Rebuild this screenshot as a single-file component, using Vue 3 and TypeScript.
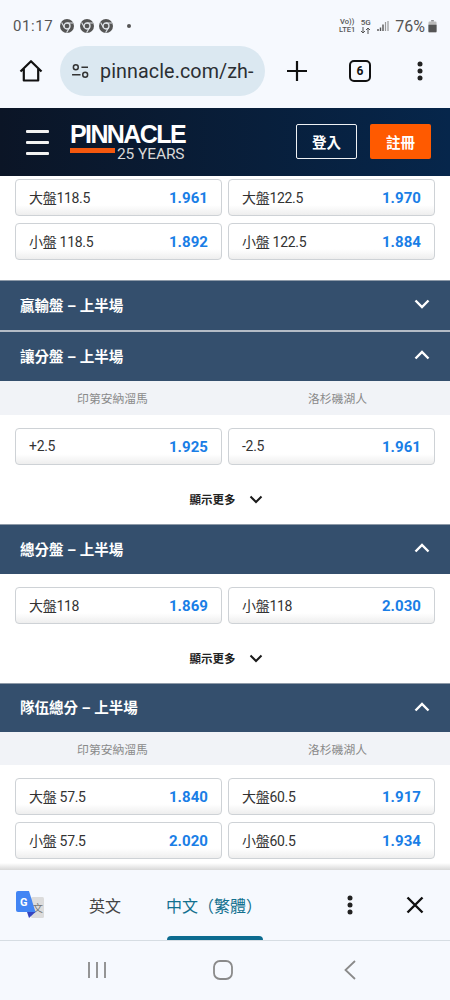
<script setup lang="ts">
interface Odd { label: string; price: string }
interface Row { left: Odd; right: Odd }
const topRows: Row[] = [
  { left: { label: '大盤118.5', price: '1.961' }, right: { label: '大盤122.5', price: '1.970' } },
  { left: { label: '小盤 118.5', price: '1.892' }, right: { label: '小盤 122.5', price: '1.884' } },
]
const spreadRows: Row[] = [
  { left: { label: '+2.5', price: '1.925' }, right: { label: '-2.5', price: '1.961' } },
]
const totalRows: Row[] = [
  { left: { label: '大盤118', price: '1.869' }, right: { label: '小盤118', price: '2.030' } },
]
const teamRows: Row[] = [
  { left: { label: '大盤 57.5', price: '1.840' }, right: { label: '大盤60.5', price: '1.917' } },
  { left: { label: '小盤 57.5', price: '2.020' }, right: { label: '小盤60.5', price: '1.934' } },
]
const sections = [
  { title: '讓分盤 – 上半場', teams: true, rows: spreadRows, more: true },
  { title: '總分盤 – 上半場', teams: false, rows: totalRows, more: true },
  { title: '隊伍總分 – 上半場', teams: true, rows: teamRows, more: false },
]
</script>

<template>
  <div class="phone">
    <div class="status">
      <div class="status-left">
        <span class="clock">01:17</span>
        <svg v-for="n in 3" :key="n" class="chrome" viewBox="0 0 14 14">
          <circle cx="7" cy="7" r="7" fill="#555" />
          <circle cx="7" cy="7" r="3" fill="#555" stroke="#dfe3e8" stroke-width="1.3" />
          <path d="M7 4H13M4.400 8.500L1.600 3.500M9.600 8.500L6.600 13.600" stroke="#dfe3e8" stroke-width="1.100" fill="none" />
        </svg>
        <span class="dot"></span>
      </div>
      <div class="status-right">
        <span class="net"><span>Vo))</span><span>LTE1</span></span>
        <span class="net net-5g">
          <span>5G</span>
          <svg class="arrows" viewBox="0 0 11 7">
            <path d="M3 0v6M1 4l2 2 2-2M8 7V1M6 3l2-2 2 2" fill="none" stroke="#555" stroke-width="1" />
          </svg>
        </span>
        <svg class="signal" viewBox="0 0 12 12">
          <path d="M1 9v2M3.500 7.500v3.500M6 4.500v6.500" stroke="#555" stroke-width="1.400" />
          <path d="M8.500 2v9M11 1v10" stroke="#999" stroke-width="1.200" />
        </svg>
        <span class="pct">76%</span>
        <svg class="battery" viewBox="0 0 10 14">
          <path d="M3.500 0h3v1.500h-3z" fill="#777" />
          <rect x="0.500" y="1.500" width="9" height="12" rx="1.300" fill="#bbb" />
          <path d="M0.500 5h9v7.200a1.300 1.300 0 0 1-1.300 1.300H1.800a1.300 1.300 0 0 1-1.300-1.300z" fill="#555" />
        </svg>
      </div>
    </div>

    <div class="toolbar">
      <svg class="home" viewBox="0 0 24 24">
        <path d="M1.500 12.500L12 2.200 22.500 12.500M4.800 10v11.500h14.400V10" fill="none" stroke="#111" stroke-width="2.200" stroke-linejoin="round" />
      </svg>
      <div class="url">
        <svg class="tune" viewBox="0 0 20 16">
          <circle cx="5" cy="3.500" r="2.600" fill="none" stroke="#333" stroke-width="1.600" />
          <path d="M11 3.500h7M1 11.500h9" stroke="#333" stroke-width="1.600" />
          <circle cx="15" cy="11.500" r="2.600" fill="none" stroke="#333" stroke-width="1.600" />
        </svg>
        <span class="url-text">pinnacle.com/zh-</span>
      </div>
      <svg class="plus" viewBox="0 0 20 20"><path d="M10 0v20M0 10h20" stroke="#111" stroke-width="2.200" /></svg>
      <span class="tabs">6</span>
      <svg class="kebab" viewBox="0 0 6 20">
        <circle cx="3" cy="3" r="2.500" fill="#222" />
        <circle cx="3" cy="10" r="2.500" fill="#222" />
        <circle cx="3" cy="17" r="2.500" fill="#222" />
      </svg>
    </div>

    <header class="site">
      <div class="burger"><i></i><i></i><i></i></div>
      <div class="logo">
        <div class="logo-main">PINNACLE</div>
        <div class="logo-sub"><span class="logo-bar"></span><span class="logo-years">25 YEARS</span></div>
      </div>
      <div class="actions">
        <button class="login">登入</button>
        <button class="signup">註冊</button>
      </div>
    </header>

    <main class="content">
      <div class="odds odds-top">
        <div v-for="(row, i) in topRows" :key="i" class="odd-row">
          <div class="odd"><span>{{ row.left.label }}</span><b>{{ row.left.price }}</b></div>
          <div class="odd"><span>{{ row.right.label }}</span><b>{{ row.right.price }}</b></div>
        </div>
      </div>

      <div class="bar bar-first">
        <span>贏輸盤 – 上半場</span>
        <svg class="chev" viewBox="0 0 16 10"><path d="M1.500 1.500L8 8l6.500-6.500" fill="none" stroke="#fff" stroke-width="2.400" /></svg>
      </div>

      <section v-for="s in sections" :key="s.title">
        <div class="bar">
          <span>{{ s.title }}</span>
          <svg class="chev" viewBox="0 0 16 10"><path d="M1.500 8.500L8 2l6.500 6.500" fill="none" stroke="#fff" stroke-width="2.400" /></svg>
        </div>
        <div v-if="s.teams" class="teams"><span>印第安納溜馬</span><span>洛杉磯湖人</span></div>
        <div class="odds">
          <div v-for="(row, i) in s.rows" :key="i" class="odd-row">
            <div class="odd"><span>{{ row.left.label }}</span><b>{{ row.left.price }}</b></div>
            <div class="odd"><span>{{ row.right.label }}</span><b>{{ row.right.price }}</b></div>
          </div>
        </div>
        <div v-if="s.more" class="more">
          <span>顯示更多</span>
          <svg class="more-chev" viewBox="0 0 14 9"><path d="M1.500 1.500L7 7l5.500-5.500" fill="none" stroke="#1a1a1a" stroke-width="2" /></svg>
        </div>
      </section>
    </main>

    <div class="translate">
      <svg class="gt" viewBox="0 0 28 28">
        <rect x="15" y="6" width="13" height="21" rx="1.500" fill="#dcdcdc" />
        <text x="16.500" y="21" class="gt-wen">文</text>
        <path d="M2 0h11l6.500 21H2a2 2 0 0 1-2-2V2a2 2 0 0 1 2-2z" fill="#4285f4" />
        <path d="M11 21h8.500l-6.500 6z" fill="#3545c0" />
        <text x="4" y="15" class="gt-g">G</text>
      </svg>
      <span class="lang lang-en">英文</span>
      <span class="lang lang-zh">中文（繁體）</span>
      <svg class="t-kebab" viewBox="0 0 6 20">
        <circle cx="3" cy="3" r="2.500" fill="#222" />
        <circle cx="3" cy="10" r="2.500" fill="#222" />
        <circle cx="3" cy="17" r="2.500" fill="#222" />
      </svg>
      <svg class="t-close" viewBox="0 0 18 18"><path d="M1.500 1.500l15 15M16.500 1.500l-15 15" stroke="#111" stroke-width="2.400" /></svg>
    </div>

    <nav class="sysnav">
      <svg class="nav-recent" viewBox="0 0 20 18"><path d="M2 1v16M10 1v16M18 1v16" stroke="#8a8a8a" stroke-width="1.800" /></svg>
      <svg class="nav-home" viewBox="0 0 20 20"><rect x="1" y="1" width="18" height="18" rx="6" fill="none" stroke="#8a8a8a" stroke-width="1.800" /></svg>
      <svg class="nav-back" viewBox="0 0 12 20"><path d="M11 1L1.500 10 11 19" fill="none" stroke="#8a8a8a" stroke-width="1.800" /></svg>
    </nav>
  </div>
</template>

<style scoped>
.phone {
  width: 450px;
  height: 1000px;
  display: flex;
  flex-direction: column;
  overflow: hidden;
  background: #fff;
  font-family: Roboto, "Noto Sans CJK TC", sans-serif;
}
.status {
  height: 44px;
  flex: none;
  padding: 8px 13px 0 13px;
  background: #f6f9fe;
  display: flex;
  align-items: center;
  justify-content: space-between;
  color: #555;
  box-sizing: border-box;
}
.status-left, .status-right { display: flex; align-items: center; }
.clock { font-size: 15px; letter-spacing: 0.6px; margin-right: 7px; }
.chrome { width: 14px; height: 14px; margin-right: 5.500px; }
.dot { width: 4px; height: 4px; border-radius: 50%; background: #555; margin-left: 8px; }
.net {
  display: flex; flex-direction: column; align-items: center;
  font-size: 7.500px; line-height: 8px; font-weight: 500; margin-right: 5px;
}
.net-5g { font-size: 8px; margin-right: 6px; }
.arrows { width: 11px; height: 7px; display: block; }
.signal { width: 12px; height: 12px; margin-right: 6px; }
.pct { font-size: 16px; margin-right: 3px; }
.battery { width: 9px; height: 13px; }

.toolbar {
  height: 64px;
  flex: none;
  background: #f6f9fe;
  display: flex;
  align-items: center;
  box-sizing: border-box;
  padding: 0 0 10px 19px;
}
.home { width: 24px; height: 24px; flex: none; }
.url {
  margin-left: 17px;
  width: 205px;
  height: 50px;
  border-radius: 25px;
  background: #dbe8f1;
  display: flex;
  align-items: center;
  padding-left: 11px;
  box-sizing: border-box;
  flex: none;
}
.tune { width: 19px; height: 15px; flex: none; }
.url-text { font-size: 19.700px; color: #2b2f33; margin-left: 10px; letter-spacing: 0.1px; white-space: nowrap; }
.plus { width: 20px; height: 20px; margin-left: 22px; flex: none; }
.tabs {
  margin-left: 42px;
  width: 22px; height: 22px;
  border: 2px solid #111;
  border-radius: 5px;
  box-sizing: border-box;
  display: flex; align-items: center; justify-content: center;
  font-size: 12px; font-weight: 700; color: #111;
  flex: none;
}
.kebab { width: 6px; height: 20px; margin-left: 46px; flex: none; }

.site {
  height: 68px;
  flex: none;
  box-sizing: border-box;
  background: linear-gradient(90deg, #0b1526 0%, #06264b 100%);
  display: flex;
  align-items: center;
  padding: 0 19px 0 26px;
}
.burger { width: 23px; display: flex; flex-direction: column; gap: 8px; }
.burger i { display: block; height: 3px; background: #f2f2f2; border-radius: 1px; }
.logo { margin-left: 21px; width: 116px; color: #fff; }
.logo-main {
  font-family: "Liberation Sans", sans-serif;
  font-weight: 700;
  font-size: 25px;
  line-height: 19px;
  letter-spacing: -1.600px;
  white-space: nowrap;
  margin-bottom: 4px;
}
.logo-sub { display: flex; align-items: flex-start; height: 12px; }
.logo-bar { width: 45px; height: 5px; background: #f4580e; flex: none; }
.logo-years {
  font-size: 15.500px; line-height: 12px; color: #d8d8d8; white-space: nowrap; margin-left: 2px; letter-spacing: -0.100px;
}
.actions { margin-left: auto; display: flex; gap: 13px; margin-bottom: 1px; }
.login, .signup {
  width: 61px; height: 35px; border-radius: 2px;
  font-family: inherit; font-size: 14.500px; font-weight: 700; color: #fff;
  display: flex; align-items: center; justify-content: center; padding: 0; box-sizing: border-box;
}
.login { background: transparent; border: 1px solid #eef1f4; }
.signup { background: #ff5a00; border: 0; }

.content { flex: 1; min-height: 0; overflow: hidden; background: #fff; position: relative; }
.content::after {
  content: ""; position: absolute; left: 0; right: 0; bottom: 0; height: 7px;
  background: linear-gradient(180deg, rgba(210,210,210,0), rgba(200,200,200,0.7));
}
.odds { padding: 13px 15px 13px; display: flex; flex-direction: column; gap: 7px; }
.odds-top { padding: 3px 15px 20px; }
.odd-row { display: flex; gap: 6px; }
.odd {
  flex: 1;
  height: 37px;
  box-sizing: border-box;
  border: 1px solid #ced2d6;
  border-radius: 4px;
  background: linear-gradient(180deg, #fff 0%, #fff 72%, #eeeeee 100%);
  display: flex;
  align-items: center;
  justify-content: space-between;
  padding: 0 13px;
  font-size: 14px;
  letter-spacing: -0.300px;
  color: #333;
}
.odd span { padding-bottom: 2px; }
.odd b { font-size: 15px; font-weight: 700; color: #1a7ee6; letter-spacing: 0.05px; }
.bar {
  height: 50px;
  box-sizing: border-box;
  background: #344f6d;
  border-top: 1px solid #8e9aa8;
  color: #fff;
  font-size: 14.500px;
  font-weight: 700;
  display: flex;
  align-items: center;
  justify-content: space-between;
  padding: 0 20px 3px 20px;
}
section:first-of-type .bar { border-top: 2px solid #b4bcc6; height: 51px; }
section:last-of-type .bar { height: 49px; }
.chev { width: 16px; height: 10px; }
.teams {
  height: 34px;
  box-sizing: border-box;
  padding-bottom: 1px;
  background: #f1f3f7;
  display: grid;
  grid-template-columns: 1fr 1fr;
  align-items: center;
  text-align: center;
  font-size: 11.800px;
  color: #8a8a8a;
}
section:last-of-type .teams { height: 33px; }
.more {
  height: 46px;
  box-sizing: border-box;
  display: flex;
  align-items: center;
  justify-content: center;
  gap: 13px;
  font-size: 11.500px;
  font-weight: 700;
  color: #222;
  padding: 0 0 4px 2px;
}
.more-chev { width: 14px; height: 9px; }

.translate {
  height: 71px;
  flex: none;
  box-sizing: border-box;
  background: #f6f9fe;
  border-bottom: 1px solid #d6dde3;
  display: flex;
  align-items: center;
  position: relative;
  padding-left: 16px;
}
.gt { width: 28px; height: 28px; flex: none; }
.gt-wen { font-size: 10.500px; fill: #777; font-family: "Noto Sans CJK TC", sans-serif; }
.gt-g { font-size: 11px; font-weight: 700; fill: #fff; font-family: Roboto, sans-serif; }
.lang { font-size: 16px; white-space: nowrap; flex: none; }
.lang-en { color: #444; margin-left: 45px; }
.lang-zh { color: #12708f; margin-left: 45px; }
.lang-zh::after {
  content: ""; position: absolute; left: 167px; width: 96px; height: 4px; bottom: 0;
  background: #0d6c90; border-radius: 4px 4px 0 0;
}
.t-kebab { position: absolute; left: 347px; top: 25px; width: 6px; height: 20px; }
.t-close { position: absolute; left: 406px; top: 26px; width: 18px; height: 18px; }

.sysnav {
  height: 59px;
  flex: none;
  background: #f6f9fe;
  position: relative;
}
.nav-recent { position: absolute; left: 87px; top: 20px; width: 20px; height: 18px; }
.nav-home { position: absolute; left: 213px; top: 19px; width: 20px; height: 20px; }
.nav-back { position: absolute; left: 344px; top: 19px; width: 12px; height: 20px; }
</style>
